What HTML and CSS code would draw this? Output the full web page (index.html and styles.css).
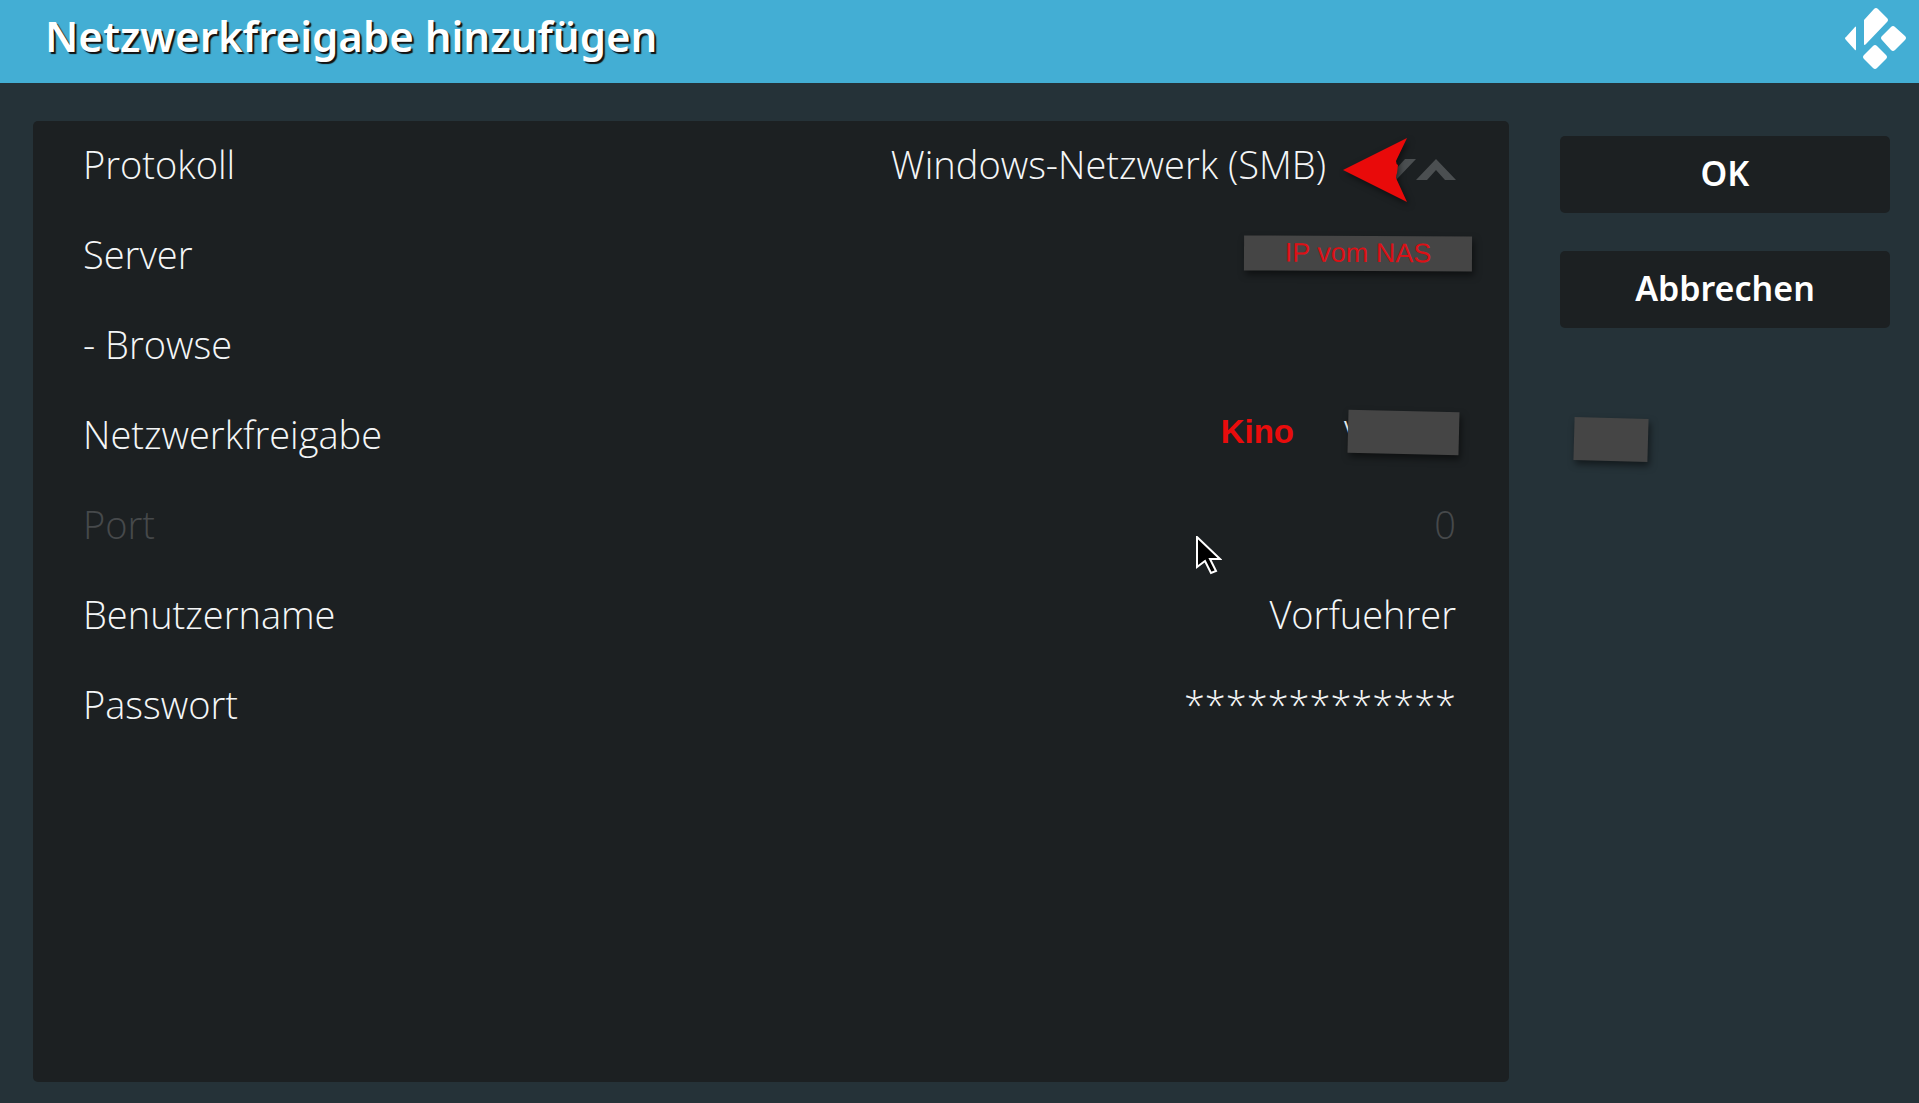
FILE: index.html
```html
<!DOCTYPE html>
<html lang="de">
<head>
    <meta charset="UTF-8">
    <meta name="viewport" content="width=device-width, initial-scale=1.0">
    <title>Netzwerkfreigabe hinzufügen</title>
    <link rel="stylesheet" href="styles.css">
</head>
<body>
    <header class="topbar">
        <h1>Netzwerkfreigabe hinzufügen</h1>
        <svg class="logo" viewBox="0 0 62 62" aria-hidden="true">
            <path d="M11 20v22q0 2-1 1L1 33q-2-2 0-3L10 20q1-1 1 0z"/>
            <path d="M19 37V13L29 2q2-2 4 0l9 9q2 2 0 4L21 37q-2 2-2 0z"/>
            <path d="M28 39q2-2 4 0l9 9q2 2 0 4l-9 9q-2 2-4 0l-9-9q-2-2 0-4z"/>
            <path d="M46 20q2-2 4 0l10 9q2 2 0 4l-10 10q-2 2-4 0l-9-10q-2-2 0-4z"/>
        </svg>
    </header>
    <main class="dialog">
        <form class="settings" id="share-form">
            <div class="row">
                <label for="protocol">Protokoll</label>
                <select id="protocol">
                    <option>Windows-Netzwerk (SMB)</option>
                </select>
                <div class="spinner">
                    <button type="button" aria-label="Zurück">
                        <svg viewBox="0 0 40 21"><path d="M0 0h11l9 10 9-10h11L20 21z"/></svg>
                    </button>
                    <button type="button" aria-label="Weiter">
                        <svg viewBox="0 0 40 21"><path d="M0 21h11l9-10 9 10h11L20 0z"/></svg>
                    </button>
                </div>
                <svg class="arrow" viewBox="0 0 64 64" aria-hidden="true">
                    <path d="M0 32L64 0L53 23Q53 26 55 27L54 35Q53 37 53 40L64 64z"/>
                </svg>
            </div>
            <div class="row">
                <label for="server">Server</label>
                <input type="text" id="server">
                <span class="note note-server">IP vom NAS</span>
            </div>
            <div class="row">
                <button type="button" class="browse">- Browse</button>
            </div>
            <div class="row">
                <label for="share">Netzwerkfreigabe</label>
                <input type="text" id="share" class="share-input" value="V">
                <span class="note-kino">Kino</span>
                <span class="note note-share"></span>
            </div>
            <div class="row disabled">
                <label for="port">Port</label>
                <input type="text" id="port" value="0" disabled>
                <svg class="pointer" viewBox="0 0 26 40" aria-hidden="true">
                    <path d="M1 1v30l8-6 6 12 5-2-6-12h10z"/>
                </svg>
            </div>
            <div class="row">
                <label for="username">Benutzername</label>
                <input type="text" id="username" value="Vorfuehrer">
            </div>
            <div class="row">
                <label for="password">Passwort</label>
                <input type="text" id="password" value="*************" autocomplete="off">
            </div>
        </form>
        <aside class="actions">
            <button type="submit" form="share-form">OK</button>
            <button type="button">Abbrechen</button>
            <span class="note note-side"></span>
        </aside>
    </main>
</body>
</html>
```

FILE: styles.css
```css
* {
    box-sizing: border-box;
}
body {
    margin: 0;
    min-height: 100vh;
    display: flex;
    flex-direction: column;
    background-color: #253238;
    color: #f4f6f7;
    font-family: "Noto Sans", sans-serif;
}
.topbar {
    display: flex;
    justify-content: space-between;
    align-items: center;
    height: 83px;
    padding: 0 12px 8px 45px;
    background-color: #43aed4;
}
.topbar h1 {
    margin: 0;
    padding-bottom: 4px;
    font-size: 42px;
    font-weight: 600;
    color: #fff;
    text-shadow: 2px 2px 1px #111;
}
.logo {
    width: 62px;
    height: 62px;
    fill: #fff;
}
.dialog {
    flex: 1;
    display: grid;
    grid-template-columns: 1fr 330px;
    gap: 51px;
    padding: 38px 29px 21px 33px;
}
.settings {
    padding: 0 53px 0 50px;
    background-color: #1c2022;
    border-radius: 5px;
}
.row {
    position: relative;
    display: flex;
    align-items: center;
    height: 90px;
    padding-bottom: 5px;
    font-family: "Open Sans", "Noto Sans", sans-serif;
    font-size: 38px;
    font-weight: 300;
}
.row input,
.row select,
.browse {
    flex: 1;
    min-width: 0;
    padding: 0;
    border: none;
    outline: none;
    appearance: none;
    background: none;
    color: inherit;
    font: inherit;
    text-align: right;
    opacity: 1;
}
.row select {
    text-align-last: right;
}
.row .browse {
    text-align: left;
    cursor: pointer;
}
.row .share-input {
    padding-right: 90px;
}
.disabled {
    color: #46494b;
}
.spinner {
    display: flex;
    margin-left: 50px;
    padding-top: 12px;
}
.spinner button {
    display: flex;
    padding: 0;
    border: none;
    background: none;
    cursor: pointer;
}
.spinner svg {
    width: 40px;
    height: 21px;
    fill: #4b4f51;
}

/* Notes on top of the form */
.note {
    position: absolute;
    background-color: #454545;
    box-shadow: 2px 4px 7px rgba(0, 0, 0, 0.5);
}
.note-server {
    right: -16px;
    top: 25px;
    width: 228px;
    color: #dd1016;
    font-family: "Liberation Sans", Arial, sans-serif;
    font-size: 27px;
    font-weight: 400;
    line-height: 35px;
    text-align: center;
    transform: rotate(0.3deg);
}
.note-kino {
    position: absolute;
    right: 162px;
    top: 22px;
    color: #e90c0c;
    font-family: "Liberation Sans", Arial, sans-serif;
    font-size: 33px;
    font-weight: 700;
}
.note-share {
    right: -3px;
    top: 20px;
    width: 111px;
    height: 43px;
    transform: rotate(1.4deg);
}
.note-side {
    left: 14px;
    top: 297px;
    width: 74px;
    height: 43px;
    transform: rotate(1.6deg);
}
.arrow {
    position: absolute;
    right: 49px;
    top: 17px;
    width: 64px;
    height: 64px;
    fill: #e90a0a;
    filter: drop-shadow(2px 3px 3px rgba(0, 0, 0, 0.5));
}
.pointer {
    position: absolute;
    right: 234px;
    top: 55px;
    width: 26px;
    height: 40px;
    fill: #000;
    stroke: #fff;
    stroke-width: 2px;
}

.actions {
    position: relative;
    display: flex;
    flex-direction: column;
    gap: 38px;
    padding-top: 15px;
}
.actions button {
    height: 77px;
    padding: 0 0 3px;
    border: none;
    border-radius: 5px;
    background-color: #1c2022;
    color: #fff;
    font-family: inherit;
    font-size: 34px;
    font-weight: 600;
    cursor: pointer;
}
```
